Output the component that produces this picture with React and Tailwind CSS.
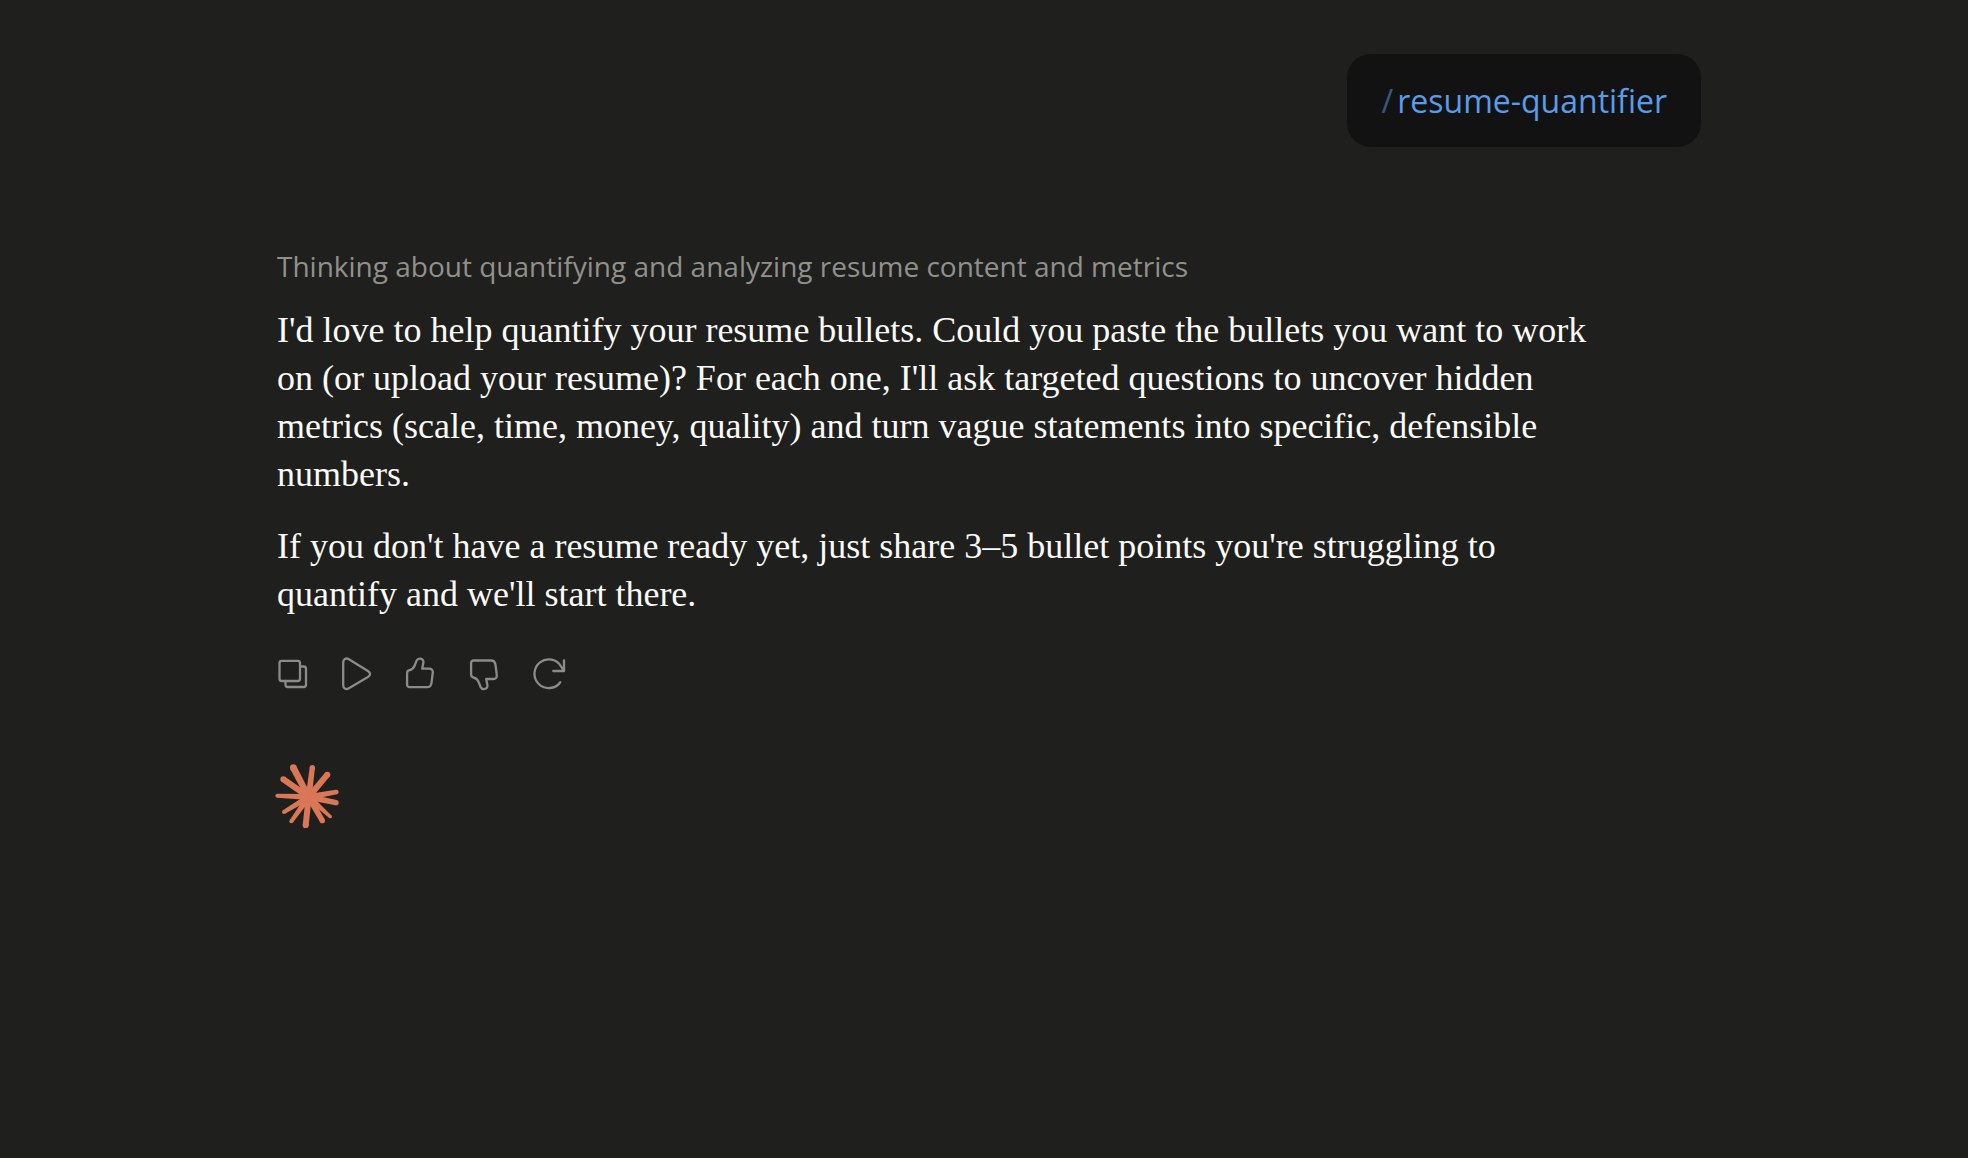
const paragraphs = [
  "I'd love to help quantify your resume bullets. Could you paste the bullets you want to work on (or upload your resume)? For each one, I'll ask targeted questions to uncover hidden metrics (scale, time, money, quality) and turn vague statements into specific, defensible numbers.",
  "If you don't have a resume ready yet, just share 3–5 bullet points you're struggling to quantify and we'll start there.",
]

const thumbPath =
  'M5.1 17.2c0-2 .9-2.7 2.4-3 2.8-.6 4.3-2.4 5.200-4.700l1.900-4.800c.6-1.400 1.700-2.100 3.200-2.100 2.400 0 4 1.700 3.600 3.900l-1.200 6.200h7.100c2.300 0 3.800 1.600 3.500 3.800l-1.300 10.300c-.3 2.600-1.900 4.400-4.500 4.400H7.600c-1.500 0-2.500-1-2.500-2.500z'

const actions = [
  {
    label: 'Copy',
    icon: (
      <>
        <rect x="5.5" y="4.8" width="20.5" height="20.2" rx="2.2" />
        <path d="M26 10.500h3.800c1.200 0 2.200 1 2.200 2.200v16.100c0 1.200-1 2.200-2.200 2.200H13.700c-1.200 0-2.200-1-2.200-2.200V25" />
      </>
    ),
  },
  {
    label: 'Read aloud',
    icon: (
      <path d="M5.200 6.300c0-3 2.700-4.700 5.300-3.200l19.400 11.800c2.900 1.700 2.900 4.300 0 6L10.500 32.500c-2.600 1.500-5.300-.2-5.300-3.200z" />
    ),
  },
  { label: 'Good response', icon: <path d={thumbPath} /> },
  {
    label: 'Bad response',
    icon: <path d={thumbPath} transform="translate(0 35.7) scale(1 -1)" />,
  },
  {
    label: 'Retry',
    icon: (
      <path d="M30.300 26.200A14.300 14.300 0 1 1 31.200 10.700L34 15M34 4.300V15H23.300" />
    ),
  },
]

// tip x, tip y, half width at the tip
const rays = [
  [85, 52, 10],
  [142, 52, 8],
  [187, 73, 9],
  [214, 125, 7],
  [213, 157, 8],
  [196, 199, 5],
  [172, 211, 8],
  [122, 225, 9],
  [79, 213, 6],
  [57, 185, 6],
  [37, 136, 6],
  [55, 87, 9],
]

function Starburst() {
  const cx = 131
  const cy = 140
  return (
    <svg className="size-16 fill-[#d97757]" viewBox="30 41 192 192" aria-hidden="true">
      <circle cx={cx} cy={cy} r="26" />
      {rays.map(([x, y, r]) => {
        const len = Math.hypot(x - cx, y - cy)
        const nx = -(y - cy) / len
        const ny = (x - cx) / len
        const b = 9
        const points = [
          [cx + nx * b, cy + ny * b],
          [x + nx * r, y + ny * r],
          [x - nx * r, y - ny * r],
          [cx - nx * b, cy - ny * b],
        ]
        return (
          <g key={`${x}-${y}`}>
            <polygon points={points.join(' ')} />
            <circle cx={x} cy={y} r={r} />
          </g>
        )
      })}
    </svg>
  )
}

function App() {
  return (
    <div className="min-h-screen bg-[#1f1f1d] px-6 pt-[54px] pb-16">
      <main className="mx-auto flex max-w-[1434px] flex-col">

        {/* User message */}
        <div className="self-end rounded-3xl bg-[#121212] px-[34px] py-[22px] font-['Open_Sans',sans-serif] text-[32px] leading-[49px] text-[#5a9bea] [font-variant-ligatures:none]">
          <span className="mr-1 opacity-50">/</span>resume-quantifier
        </div>

        {/* Assistant message */}
        <div className="mt-[95px] px-[10px]">
          <p className="font-['Open_Sans',sans-serif] text-[28px] leading-[48px] text-[#91918b] [font-variant-ligatures:none]">
            Thinking about quantifying and analyzing resume content and metrics
          </p>
          <div className="mt-4 flex max-w-[1330px] flex-col gap-6 font-['Liberation_Serif',serif] text-[36px] leading-[48px] text-[#fafaf7]">
            {paragraphs.map((text) => (
              <p key={text}>{text}</p>
            ))}
          </div>

          {/* Actions */}
          <div className="mt-6 -ml-[17px] flex">
            {actions.map(({ label, icon }) => (
              <button
                key={label}
                type="button"
                aria-label={label}
                className="flex size-16 items-center justify-center rounded-xl text-[#8b8b87] hover:bg-white/5"
              >
                <svg
                  className="size-9"
                  viewBox="0 0 36 36"
                  fill="none"
                  stroke="currentColor"
                  strokeWidth="2.3"
                  strokeLinecap="round"
                  strokeLinejoin="round"
                >
                  {icon}
                </svg>
              </button>
            ))}
          </div>
        </div>

        <div className="mt-[58px] px-2">
          <Starburst />
        </div>

      </main>
    </div>
  )
}

export default App
